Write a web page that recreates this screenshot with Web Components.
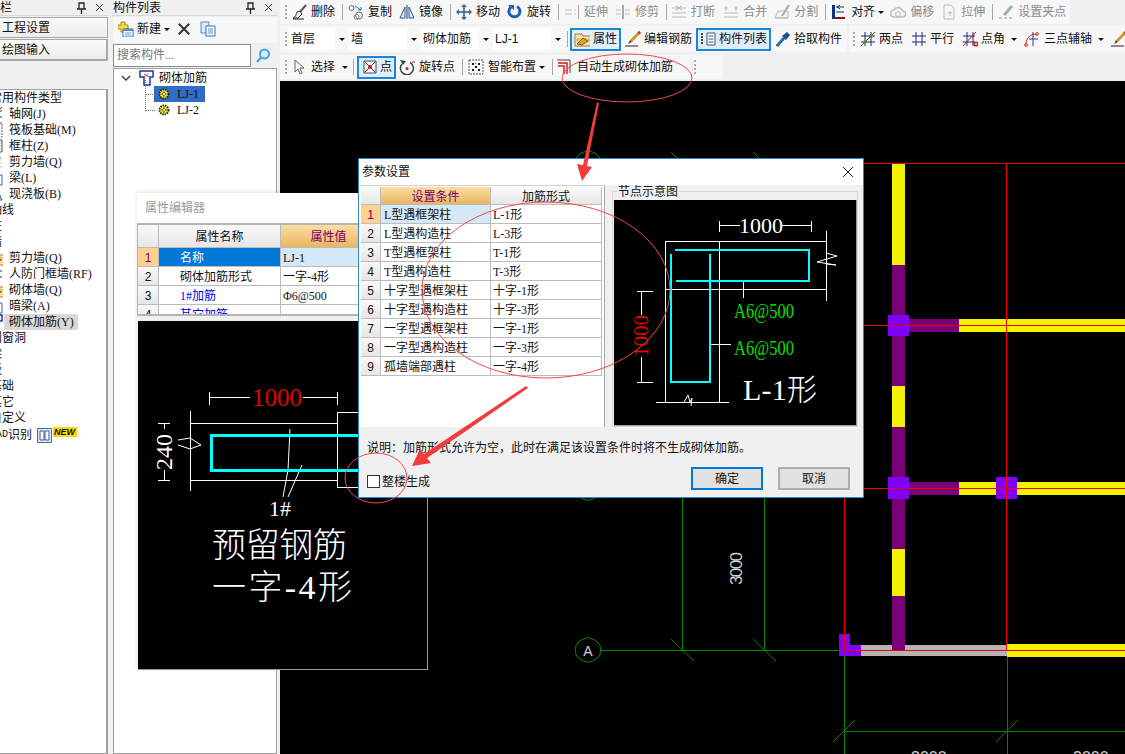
<!DOCTYPE html>
<html lang="zh">
<head>
<meta charset="utf-8">
<title>砌体加筋</title>
<style>
  html, body { margin: 0; height: 100%; overflow: hidden; background: #f0f0f0; }
  body { font: 12px/16px "Liberation Serif", "Noto Sans CJK SC", sans-serif; color: #111; }
</style>
</head>
<body>
<cad-app></cad-app>

<script>
// icons for the toolbars, all in a 16x16 box
const ICONS = {
  del: '<path d="M14 1 8 8" stroke="#556" stroke-width="2"/><path d="M8 7 10 10 6 14H1c3-1 3-4 4-6z" fill="#e8e8f4" stroke="#334"/><path d="M1 15h11" stroke="#223"/>',
  copy: '<circle cx="3.5" cy="4" r="2.5" fill="none" stroke="#666"/><circle cx="11" cy="11.5" r="3.5" fill="none" stroke="#666"/><circle cx="8.500" cy="13" r="2.500" fill="none" stroke="#888"/><path d="M7 2 13 6M13 3v3h-3" fill="none" stroke="#27a"/>',
  mirror: '<path d="M8 1v14" stroke="#335"/><path d="M6 3 1 14h5zM10 3l5 11h-5z" fill="#dfeaf8" stroke="#2a5a9a"/>',
  move: '<path d="M8 1v14M1 8h14" stroke="#2a5a8a" stroke-width="1.500"/><path d="M8 0 5 3h6zM8 16l-3-3h6zM0 8l3-3v6zM16 8l-3-3v6z" fill="#2a6aa8"/>',
  rotate: '<path d="M4 3A5.500 5.500 0 1 0 10 2.500" fill="none" stroke="#1d5fb8" stroke-width="3"/><path d="M1 1h6v5z" fill="#1d5fb8"/>',
  extend: '<path d="M1 6h7M1 10h7" stroke="#bbb"/><path d="M10 6h2M10 10h2" stroke="#ccc" stroke-dasharray="2 1"/><path d="M14.500 1v14" stroke="#aaa"/>',
  trim: '<path d="M1 6h5M1 10h5M10 6h5M10 10h5" stroke="#bbb"/><path d="M8 1v14" stroke="#aaa" stroke-width="2"/>',
  brk: '<path d="M1 4h5M10 4h5M1 13h14M1 9h14" stroke="#bbb"/><path d="M5 2 8 4 5 6M11 2 8 4l3 2" fill="none" stroke="#aaa"/>',
  merge: '<path d="M1 9h14M1 13h14" stroke="#bbb"/><path d="M3 2v5M13 2v5M1 4h4M11 4h4" stroke="#bbb"/>',
  split: '<path d="M1 14 4 7h10v7zM1 14h13" fill="#f2f2f2" stroke="#bbb"/><path d="M15 1 8 12" stroke="#aaa" stroke-width="2"/>',
  align: '<path d="M1 1h3v14H1z" fill="#12327a"/><path d="M4 13h10v2H4z" fill="#8a1020"/><path d="M5 8h8M5 3h8" stroke="#12327a"/><path d="M9 1 6 3l3 2" fill="none" stroke="#12327a"/>',
  offset: '<path d="M4 13a3.500 3.500 0 0 1 0-7 5 5 0 0 1 9 1 3 3 0 0 1-1 6z" fill="#f4f4f4" stroke="#bbb" stroke-width="1.500"/><circle cx="8" cy="10" r="2.500" fill="none" stroke="#bbb"/>',
  stretch: '<path d="M3 1h7l3 3v11H3z" fill="#f6f6f6" stroke="#bbb"/><path d="M9 7v5M7 9h4" stroke="#bbb"/>',
  grip: '<path d="M14 2 8 9 6 11" stroke="#aaa" stroke-width="3"/><path d="M1 14h3M6 14h3M11 14h3" stroke="#999"/>',
  props: '<path d="M1 3h7l1 2h8v10H1z" fill="#f8e2a8" stroke="#a87a24"/><path d="M3 8h12v2H3z" fill="#fff" stroke="#c8a050"/><path d="M3 13 9 7l5 3-6 4z" fill="#e0a030" stroke="#8a5a14"/>',
  edit: '<path d="M15 1 6 10" stroke="#c9a020" stroke-width="3"/><path d="M15 1l-1.500 1.500" stroke="#d24" stroke-width="3"/><path d="M7 11 3 13l2-4z" fill="#444"/><path d="M0 15h13" stroke="#222"/>',
  list: '<path d="M7 2h8v12H7z" fill="#fff" stroke="#456"/><path d="M8.500 5h5M8.500 8h5M8.500 11h5" stroke="#456"/><path d="M1 3h3M1 6h3M1 9h3M1 12h3" stroke="#345" stroke-width="2" stroke-dasharray="2 1"/>',
  pick: '<path d="M2 15 9 7" stroke="#2a6ab0" stroke-width="3"/><path d="M7 5 11 9 15 4 12 1z" fill="#1c4e88"/><path d="M2 15 1 14" stroke="#135"/>',
  two: '<path d="M5 1v14M11 1v14M1 5h14M1 11h14" stroke="#1a2a7a"/><path d="M1 15 15 1" stroke="#c01818"/><circle cx="11" cy="5" r="1.800" fill="#3a9a20"/><circle cx="5" cy="11" r="1.800" fill="#3a9a20"/>',
  para: '<path d="M5 1v14M11 1v14M1 5h14M1 11h14" stroke="#1a2a7a"/>',
  angle: '<path d="M5 1v14M11 1v14M1 5h12M1 11h12" stroke="#1a2a7a"/><path d="M1 15 14 1" stroke="#d01818"/><circle cx="14" cy="13" r="1.800" fill="none" stroke="#d01818" stroke-width="1.500"/>',
  arc: '<path d="M2 14C2 7 6 3 13 3" fill="none" stroke="#d01818"/><path d="M9 1v14M5 8h9" stroke="#2a3a8a"/><circle cx="2" cy="14" r="1.300" fill="#fff" stroke="#d01818"/><circle cx="13" cy="3" r="1.300" fill="#fff" stroke="#d01818"/>',
  cursor: '<path d="M4 1v12l3-3 2 5 2-1-2-5h4z" fill="#f4f6fa" stroke="#667"/>',
  point: '<path d="M2 2h12v12H2z" fill="#fff" stroke="#345"/><path d="M3 3l10 10M13 3 3 13" stroke="#345"/><circle cx="8" cy="8" r="2" fill="#d01818"/>',
  rpoint: '<path d="M3 5A6.500 6.500 0 1 0 11 3.500" fill="none" stroke="#345" stroke-width="1.500"/><path d="M1 1l6 1-3 4z" fill="#345"/><circle cx="8" cy="9.500" r="1.500" fill="#d01818"/><path d="M13 3h3" stroke="#d01818"/>',
  smart: '<path d="M1 1h14v14H1z" fill="#f8f8f8" stroke="#556" stroke-dasharray="2 1"/><path d="M4 4h2v2H4zM10 4h2v2h-2zM7 7h2v2H7zM4 10h2v2H4zM10 10h2v2h-2z" fill="#123"/><path d="M7 4h1v1H7z" fill="#2a7ad0"/>',
  auto: '<path d="M0 1h13v13" fill="none" stroke="#444"/><path d="M1 4h9v11M1 7h6v8" fill="none" stroke="#e01818" stroke-width="1.500"/>',
  fresh: '<path d="M3 1h4v3h3v4H7v3H3V8H0V4h3z" fill="#f4d84a" stroke="#b08a10"/><path d="M5 8h10v8H5z" fill="#fff" stroke="#3a6ab0"/><path d="M5 8h10v2H5z" fill="#5a8ad0"/><path d="M7 12h6M7 14h6" stroke="#7a9ad0"/>',
  dup: '<path d="M1 1h8v11H1z" fill="#dce8f8" stroke="#5a8ac0"/><path d="M6 5h9v10H6z" fill="#fff" stroke="#3a6ab0"/><path d="M8 8h5M8 10h5M8 12h5" stroke="#5a8ac0"/>',
  x: '<path d="M2 2l12 12M14 2 2 14" stroke="#333" stroke-width="2.200"/>',
  gear: '<circle cx="8" cy="8" r="6" fill="#f6e81c" stroke="#222" stroke-dasharray="2 1.200" stroke-width="2.500"/><path d="M8 4v8M4 8h8" stroke="#333"/><circle cx="8" cy="8" r="2" fill="#fff" stroke="#555"/>',
  wallset: '<path d="M2 1h13v6h-3v8H6V7H2z" fill="#fff" stroke="#1a3a9a" stroke-width="1.500"/><path d="M6 4l5 3M6 7l4-3" stroke="#d04040"/>'
};

function svgIcon(name, size = 16) {
  return `<svg width="${size}" height="${size}" viewBox="0 0 16 16">${ICONS[name] || ''}</svg>`;
}

class ToolBtn extends HTMLElement {
  connectedCallback() {
    const icon = this.getAttribute('icon');
    const label = this.getAttribute('label') || '';
    const drop = this.hasAttribute('drop');
    this.attachShadow({ mode: 'open' }).innerHTML = `
      <style>
        :host { display: inline-flex; align-items: center; gap: var(--g, 4px); height: 22px; flex-shrink: 0; white-space: nowrap; box-sizing: border-box; }
        :host([disabled]) { color: #8d8d8d; }
        :host([on]) { border: 2px solid #1a86d8; background: #dfeefb; padding: 0 2px; height: 23px; }
        svg { display: block; flex-shrink: 0; }
        i { width: 0; height: 0; margin-left: var(--d, -1px); border: 3px solid transparent; border-top: 3px solid #111; border-bottom: 0; }
      </style>
      ${svgIcon(icon)}<span>${label}</span>${drop ? '<i></i>' : ''}`;
  }
}
customElements.define('tool-btn', ToolBtn);

class ToolSep extends HTMLElement {
  connectedCallback() {
    this.attachShadow({ mode: 'open' }).innerHTML = `
      <style>:host { display: block; width: 1px; height: 16px; background: #a8a8a8; flex-shrink: 0; }</style>`;
  }
}
customElements.define('tool-sep', ToolSep);

class ToolGrip extends HTMLElement {
  connectedCallback() {
    this.attachShadow({ mode: 'open' }).innerHTML = `
      <style>:host { display: block; width: 2px; height: 15px; flex-shrink: 0;
        background: repeating-linear-gradient(#aaa 0 2px, transparent 2px 4px); }</style>`;
  }
}
customElements.define('tool-grip', ToolGrip);

class ToolCombo extends HTMLElement {
  connectedCallback() {
    const w = this.getAttribute('width') || 58;
    this.attachShadow({ mode: 'open' }).innerHTML = `
      <style>
        :host { display: flex; align-items: center; height: 22px; flex-shrink: 0; }
        div { width: ${w}px; height: 22px; line-height: 22px; background: #fff; padding-left: 2px; box-sizing: border-box; overflow: hidden; }
        span { width: 14px; display: flex; justify-content: center; }
        i { border: 3px solid transparent; border-top: 3px solid #111; border-bottom: 0; }
      </style>
      <div><slot></slot></div><span><i></i></span>`;
  }
}
customElements.define('tool-combo', ToolCombo);

// one toolbar strip; children sit in a flex row
class ToolStrip extends HTMLElement {
  connectedCallback() {
    this.attachShadow({ mode: 'open' }).innerHTML = `
      <style>
        :host { display: flex; align-items: center; flex-shrink: 0; box-sizing: border-box; font: 12px/16px "Liberation Sans", "Noto Sans CJK SC", sans-serif; }
      </style>
      <slot></slot>`;
  }
}
customElements.define('tool-strip', ToolStrip);

class ToolArea extends HTMLElement {
  connectedCallback() {
    this.attachShadow({ mode: 'open' }).innerHTML = `
      <style>
        :host { display: flex; flex-direction: column; height: 81px; flex-shrink: 0; background: #f0f0f0; overflow: hidden; }
        .r { display: flex; }
        .one { height: 24px; margin-bottom: 2px; }
        .two { height: 26px; margin-bottom: 3px; }
        .three { height: 24px; }
        tool-strip { background: #f7f7f7; }
        tool-sep { margin: 0 5px 0 7px; }
      </style>
      <div class="r one">
        <tool-strip style="padding:0 5px;width:790px">
          <tool-grip style="margin-right:5px"></tool-grip>
          <tool-btn icon="del" label="删除" style="--g:3px"></tool-btn><tool-sep></tool-sep>
          <tool-btn icon="copy" label="复制"></tool-btn>
          <tool-btn icon="mirror" label="镜像" style="margin-left:7px"></tool-btn><tool-sep></tool-sep>
          <tool-btn icon="move" label="移动"></tool-btn>
          <tool-btn icon="rotate" label="旋转" style="margin-left:7px"></tool-btn><tool-sep></tool-sep>
          <tool-btn disabled icon="extend" label="延伸"></tool-btn>
          <tool-btn disabled icon="trim" label="修剪" style="margin-left:7px"></tool-btn><tool-sep></tool-sep>
          <tool-btn disabled icon="brk" label="打断" style="margin-left:-1px"></tool-btn>
          <tool-btn disabled icon="merge" label="合并" style="margin-left:8px"></tool-btn>
          <tool-btn disabled icon="split" label="分割" style="margin-left:7px"></tool-btn><tool-sep></tool-sep>
          <tool-btn icon="align" label="对齐" drop></tool-btn>
          <tool-btn disabled icon="offset" label="偏移" style="margin-left:6px"></tool-btn>
          <tool-btn disabled icon="stretch" label="拉伸" style="margin-left:7px"></tool-btn><tool-sep></tool-sep>
          <tool-btn disabled icon="grip" label="设置夹点"></tool-btn>
        </tool-strip>
      </div>
      <div class="r two">
        <tool-strip style="padding-left:5px;width:285px">
          <tool-grip style="margin-right:2px"></tool-grip>
          <tool-combo width="46">首层</tool-combo>
          <tool-combo width="58">墙</tool-combo>
          <tool-combo width="58">砌体加筋</tool-combo>
          <tool-combo width="58">LJ-1</tool-combo>
        </tool-strip>
        <tool-strip style="padding-left:2px;width:282px">
          <tool-sep style="margin:0 2px 0 0"></tool-sep>
          <tool-btn on icon="props" label="属性" style="--g:3px;width:51px"></tool-btn>
          <tool-btn icon="edit" label="编辑钢筋" style="margin-left:4px;--g:3px"></tool-btn>
          <tool-btn on icon="list" label="构件列表" style="margin-left:4px;--g:3px;width:75px"></tool-btn>
          <tool-btn icon="pick" label="拾取构件" style="margin-left:4px;--g:3px"></tool-btn>
        </tool-strip>
        <tool-strip style="margin-left:2px;padding-left:4px;width:276px">
          <tool-grip style="margin-right:5px"></tool-grip>
          <tool-btn icon="two" label="两点" style="--g:3px"></tool-btn>
          <tool-btn icon="para" label="平行" style="margin-left:8px;--g:3px"></tool-btn>
          <tool-btn icon="angle" label="点角" drop style="margin-left:8px;--g:3px;--d:3px"></tool-btn>
          <tool-btn icon="arc" label="三点辅轴" drop style="margin-left:7px;--d:2px"></tool-btn>
          <tool-btn icon="edit" label="" style="margin-left:7px"></tool-btn>
        </tool-strip>
      </div>
      <div class="r three">
        <tool-strip style="padding-left:5px;width:410px">
          <tool-grip style="margin-right:4px"></tool-grip>
          <tool-btn icon="cursor" label="选择" drop style="--d:3px"></tool-btn>
          <tool-sep style="margin:0 3px 0 5px"></tool-sep>
          <tool-btn on icon="point" label="点" style="width:39px;--g:2px;padding-left:3px"></tool-btn>
          <tool-btn icon="rpoint" label="旋转点" style="margin-left:3px"></tool-btn><tool-sep></tool-sep>
          <tool-btn icon="smart" label="智能布置" drop></tool-btn><tool-sep></tool-sep>
          <tool-btn icon="auto" label="自动生成砌体加筋" style="margin-left:-1px"></tool-btn>
        </tool-strip>
        <tool-strip style="margin-left:3px;width:30px;padding-left:1px"><tool-grip></tool-grip></tool-strip>
      </div>`;
  }
}
customElements.define('tool-area', ToolArea);

class PaneTitle extends HTMLElement {
  connectedCallback() {
    this.attachShadow({ mode: 'open' }).innerHTML = `
      <style>
        :host { display: flex; align-items: center; height: 15px; flex-shrink: 0; overflow: hidden; border-bottom: 1px solid #d8d8d8; line-height: 14px; }
        .t { flex: 1; white-space: nowrap; }
        svg { display: block; }
      </style>
      <div class="t"><slot></slot></div>
      <svg width="9" height="12" viewBox="0 0 9 12" style="margin-right:9px"><path d="M2 1h5v6H2zM0 7h9M4.500 7v5" fill="none" stroke="#222" stroke-width="1.300"/></svg>
      <svg width="9" height="9" viewBox="0 0 9 9" style="margin-right:4px"><path d="M1 1l7 7M8 1 1 8" stroke="#333"/></svg>`;
  }
}
customElements.define('pane-title', PaneTitle);

class NavRow extends HTMLElement {
  connectedCallback() {
    const tail = this.getAttribute('icon');
    this.attachShadow({ mode: 'open' }).innerHTML = `
      <style>
        :host { display: flex; align-items: center; height: 16px; white-space: nowrap; }
        :host([group]) { margin-left: -10px; }
        :host(:not([group])) { margin-left: -13px; }
        svg { display: block; flex-shrink: 0; margin-right: 6px; }
        :host([hi]) span { background: #d8d8d8; padding: 0 4px 0 5px; margin-left: -5px; height: 16px; }
      </style>
      ${tail ? svgIcon(tail) : ''}<span><slot></slot></span>`;
  }
}
customElements.define('nav-row', NavRow);

class NavPane extends HTMLElement {
  connectedCallback() {
    this.attachShadow({ mode: 'open' }).innerHTML = `
      <style>
        :host { display: flex; flex-direction: column; width: 108px; flex-shrink: 0; overflow: hidden; }
        .btn { height: 21px; line-height: 21px; box-sizing: border-box; padding-left: 2px; border: 1px solid #a8a8a8; border-left: 0; background: linear-gradient(#fafafa, #ececec); margin-top: 1px; }
        .btn + .btn { height: 22px; border-right-width: 2px; border-bottom-width: 2px; }
        .spacer { height: 28px; }
        .tree { flex: 1; background: #fff; border: 1px solid #a0a0a0; border-left: 0; border-right-width: 2px; overflow: hidden; }
        .new { display: inline-flex; align-items: center; }
        .new em { font: 10px/16px "Liberation Mono", monospace; }
        .new svg { display: block; margin-left: 5px; }
        .new b { font: italic bold 9px/10px "Liberation Sans", sans-serif; background: #ffd800; color: #111; padding: 0 2px 0 1px; margin: -7px 0 0 1px; }
      </style>
      <pane-title>栏</pane-title>
      <div class="btn">工程设置</div>
      <div class="btn">绘图输入</div>
      <div class="spacer"></div>
      <div class="tree">
        <nav-row group>常用构件类型</nav-row>
        <nav-row icon="two">轴网(J)</nav-row>
        <nav-row icon="smart">筏板基础(M)</nav-row>
        <nav-row icon="list">框柱(Z)</nav-row>
        <nav-row icon="merge">剪力墙(Q)</nav-row>
        <nav-row icon="dup">梁(L)</nav-row>
        <nav-row icon="mirror">现浇板(B)</nav-row>
        <nav-row group>轴线</nav-row>
        <nav-row group>柱</nav-row>
        <nav-row group>墙</nav-row>
        <nav-row icon="props">剪力墙(Q)</nav-row>
        <nav-row icon="para">人防门框墙(RF)</nav-row>
        <nav-row icon="props">砌体墙(Q)</nav-row>
        <nav-row icon="dup">暗梁(A)</nav-row>
        <nav-row hi icon="wallset">砌体加筋(Y)</nav-row>
        <nav-row group>门窗洞</nav-row>
        <nav-row group>梁</nav-row>
        <nav-row group>板</nav-row>
        <nav-row group>基础</nav-row>
        <nav-row group>其它</nav-row>
        <nav-row group>自定义</nav-row>
        <nav-row group><span class="new"><em>CAD</em>识别<svg width="15" height="15" viewBox="0 0 15 15"><path d="M.500.500h14v14H.500z" fill="#dfe8f6" stroke="#4a6a9a"/><path d="M3 3h4v9H3zM8 3h4v9H8z" fill="#fff" stroke="#3a5a9a"/></svg><b>NEW</b></span></nav-row>
      </div>`;
  }
}
customElements.define('nav-pane', NavPane);

class PartPane extends HTMLElement {
  connectedCallback() {
    this.attachShadow({ mode: 'open' }).innerHTML = `
      <style>
        :host { display: flex; flex-direction: column; width: 164px; flex-shrink: 0; overflow: hidden; }
        .bar { display: flex; align-items: center; height: 26px; padding: 0 0 2px 5px; box-sizing: border-box; background: #f7f7f7; margin-top: 1px; }
        .bar svg { display: block; }
        .bar i { border: 3px solid transparent; border-top: 3px solid #111; border-bottom: 0; margin: 0 7px 0 3px; }
        .search { display: flex; height: 25px; align-items: center; }
        .search div { width: 138px; height: 23px; line-height: 21px; box-sizing: border-box; border: 1px solid #8c8c8c; background: #fff; color: #777; padding-left: 3px; }
        .search svg { margin-left: 5px; }
        .tree { flex: 1; background: #fff; border: 1px solid #a0a0a0; position: relative; padding-left: 7px; }
        .row { display: flex; align-items: center; height: 16px; white-space: nowrap; }
        .top { height: 17px; }
        .top svg:first-child { margin-right: 7px; }
        .top span { margin-left: 5px; }
        .kid { margin-left: 33px; width: 51px; padding-left: 4px; box-sizing: border-box; gap: 7px; }
        .kid.sel { background: #2f6cc4; }
        .dots { position: absolute; left: 31px; top: 11px; width: 9px; height: 31px; box-sizing: border-box; border-left: 1px dotted #666; }
        .dots::before, .dots::after { content: ""; position: absolute; left: 0; width: 9px; border-top: 1px dotted #666; }
        .dots::before { top: 14px; } .dots::after { top: 30px; }
      </style>
      <pane-title>构件列表</pane-title>
      <div class="bar">
        ${svgIcon('fresh')}<span style="margin-left:3px">新建</span><i></i>
        ${svgIcon('x', 14)}<span style="width:9px"></span>${svgIcon('dup')}
      </div>
      <div class="search">
        <div>搜索构件...</div>
        <svg width="15" height="15" viewBox="0 0 15 15"><circle cx="8.500" cy="6" r="4.500" fill="#d6ecfa" stroke="#4aa3df" stroke-width="2"/><path d="M5 9.500 1 14" stroke="#4aa3df" stroke-width="2.500"/></svg>
      </div>
      <div class="tree">
        <div class="dots"></div>
        <div class="row top">
          <svg width="10" height="6" viewBox="0 0 10 6"><path d="M1 1l4 4 4-4" fill="none" stroke="#444" stroke-width="1.500"/></svg>
          ${svgIcon('wallset')}<span>砌体加筋</span>
        </div>
        <div class="row kid sel">${svgIcon('gear', 12)}<span>LJ-1</span></div>
        <div class="row kid">${svgIcon('gear', 12)}<span>LJ-2</span></div>
      </div>`;
  }
}
customElements.define('part-pane', PartPane);

// plain spreadsheet grid used by both floating windows
class DataGrid extends HTMLElement {
  connectedCallback() {
    const widths = this.getAttribute('widths').split(',').map(Number);
    const head = this.getAttribute('head').split('|');
    const rows = this.getAttribute('rows').split(';').map((r) => r.split('|'));
    const activeCol = Number(this.getAttribute('active-col'));
    const headH = Number(this.getAttribute('head-height') || 18);
    const strong = this.getAttribute('strong-col');
    const soft = this.getAttribute('soft-col');
    const blue = (this.getAttribute('blue-rows') || '').split(',');
    const cols = widths.map((w) => w + 'px').join(' ');
    const headCells = head.map((h, i) => `<div class="c hd ${i === activeCol ? 'act' : ''}">${h}</div>`).join('');
    const body = rows.map((r, ri) => {
      const n = ri + 1;
      const cells = r.map((t, ci) => {
        let cls = 'c v' + ci;
        if (ri === 0 && String(ci) === strong) cls += ' strong';
        if (ri === 0 && String(ci) === soft) cls += ' soft';
        if (ci === 0 && blue.includes(String(n))) cls += ' blue';
        return `<div class="${cls}">${t}</div>`;
      }).join('');
      return `<div class="c n ${ri === 0 ? 'cur' : ''}">${n}</div>${cells}`;
    }).join('');
    this.attachShadow({ mode: 'open' }).innerHTML = `
      <style>
        :host { display: block; overflow: hidden; }
        .g { display: grid; grid-template-columns: ${cols}; grid-template-rows: ${headH}px; grid-auto-rows: 19px; }
        .c { box-sizing: border-box; border-right: 1px solid #bcbcbc; border-bottom: 1px solid #bcbcbc; line-height: 21px; white-space: nowrap; overflow: hidden; padding-left: var(--pad0, 3px); background: #fff; }
        .v1 { padding-left: 2px; }
        .hd { text-align: center; padding: 0; line-height: ${headH + 2}px; background: linear-gradient(#fafafa, #e6e6e6); }
        .act { background: linear-gradient(#fcdda0, #e8b662); color: #74006e; }
        .n { text-align: center; padding: 0; background: linear-gradient(#f8f8f8, #e6e6e6); font-family: "Liberation Sans", sans-serif; }
        .cur { background: #fdd28c; color: #74006e; }
        .soft { background: #d6e7f6; }
        .strong { background: #0078d7; color: #fff; }
        .blue { color: #0000f0; }
      </style>
      <div class="g"><div class="c hd"></div>${headCells}${body}</div>`;
  }
}
customElements.define('data-grid', DataGrid);

class PropEditor extends HTMLElement {
  connectedCallback() {
    this.attachShadow({ mode: 'open' }).innerHTML = `
      <style>
        :host { position: absolute; left: 137px; top: 193px; width: 291px; height: 477px; display: flex; flex-direction: column; background: #f0f0f0; box-shadow: 0 -1px 4px rgba(0,0,0,.12); }
        .title { height: 30px; line-height: 30px; padding-left: 8px; background: #fff; color: #9a9a9a; flex-shrink: 0; }
        .table { height: 93px; box-sizing: border-box; border: 1px solid #b4b4b4; border-width: 2px 0 2px 1px; background: #fff; flex-shrink: 0; --pad0: 21px; }
        data-grid { height: 89px; }
        .pic { flex: 1; margin-top: 5px; margin-left: 1px; background: #000; border-right: 1px solid #999; border-bottom: 1px solid #999; }
        svg { display: block; }
      </style>
      <div class="title">属性编辑器</div>
      <div class="table">
        <data-grid widths="21,122,96" head="属性名称|属性值" active-col="1" head-height="23"
          strong-col="0" soft-col="1" blue-rows="3,4"
          rows="名称|LJ-1;砌体加筋形式|一字-4形;1#加筋| Φ6@500;其它加筋|"></data-grid>
      </div>
      <div class="pic">
        <svg width="289" height="348" viewBox="138 321 289 348" fill="none" shape-rendering="crispEdges">
          <path stroke="#fff" d="M209 397h41M303 397h34M209 392v13M337 392v13M190 411v80M190 423h147M190 480h147M337 412h30v75h-30zM158 423h12M158 480h12M164 423v6M164 470v10"/>
          <path stroke="#fff" shape-rendering="auto" d="M178 440l12-2 11 7-11 4-12-4M290 429l-2 41-5 27M302 465l-14 32"/>
          <path stroke="#0ff" stroke-width="3" d="M211.500 435.500H380v35H211.500z"/>
          <g shape-rendering="auto" stroke="none" fill="#fff">
            <text x="277" y="406" text-anchor="middle" fill="#e00000" font-family="Liberation Serif" font-size="25">1000</text>
            <text transform="translate(172 452) rotate(-90)" text-anchor="middle" font-family="Liberation Serif" font-size="24">240</text>
            <text x="280" y="516" text-anchor="middle" font-family="Liberation Serif" font-size="22">1#</text>
            <text x="212" y="557" font-family="Noto Sans CJK SC" font-weight="300" font-size="34" textLength="135">预留钢筋</text>
            <text x="212" y="599" font-family="Liberation Serif, Noto Sans CJK SC" font-weight="300" font-size="34" textLength="140">一字-4形</text>
          </g>
        </svg>
      </div>`;
  }
}
customElements.define('prop-editor', PropEditor);

class NodePic extends HTMLElement {
  connectedCallback() {
    this.attachShadow({ mode: 'open' }).innerHTML = `
      <style>
        :host { display: block; width: 242px; height: 225px; background: #000; border-right: 1px solid #999; border-bottom: 1px solid #999; }
        svg { display: block; }
      </style>
      <svg width="242" height="225" viewBox="615 200 242 225" fill="none" shape-rendering="crispEdges">
        <path stroke="#fff" d="M720 225h21M783 225h29M720 221v11M812 221v11M666 241h161M666 289h161M666 241v161M720 241v161M827 231v70M657 402h73M744 281v17M711 344h21M638 291h16M638 382h16M642 291v24M642 357v25"/>
        <path stroke="#fff" shape-rendering="auto" d="M827 253l11 3-20 6 19 3-10-1M685 402l4-7 2 7 2-4-1 8"/>
        <path stroke="#0ff" stroke-width="2" d="M676 250h134v31h-133M672 254v128h39v-128"/>
        <g shape-rendering="auto" stroke="none">
          <text x="762" y="233" text-anchor="middle" fill="#fff" font-family="Liberation Serif" font-size="22">1000</text>
          <text transform="translate(649 336) rotate(-90)" text-anchor="middle" fill="#e00000" font-family="Liberation Serif" font-size="21">1000</text>
          <text x="735" y="318" fill="#00e000" font-family="Liberation Serif" font-size="20" textLength="60" lengthAdjust="spacingAndGlyphs">A6@500</text>
          <text x="735" y="355" fill="#00e000" font-family="Liberation Serif" font-size="20" textLength="60" lengthAdjust="spacingAndGlyphs">A6@500</text>
          <text x="744" y="400" fill="#fff" font-family="Liberation Serif, Noto Sans CJK SC" font-weight="300" font-size="30" textLength="74">L-1形</text>
        </g>
      </svg>`;
  }
}
customElements.define('node-pic', NodePic);

class ParamDialog extends HTMLElement {
  connectedCallback() {
    this.attachShadow({ mode: 'open' }).innerHTML = `
      <style>
        :host { position: absolute; left: 358px; top: 158px; width: 506px; height: 340px; box-sizing: border-box; border: 1px solid #2f86c8; background: #f0f0f0; display: flex; flex-direction: column; }
        .title { display: flex; align-items: center; justify-content: space-between; height: 26px; flex-shrink: 0; background: #fff; padding: 0 9px 0 3px; }
        .title svg { display: block; }
        .mid { display: flex; height: 243px; flex-shrink: 0; }
        .left { width: 246px; height: 242px; box-sizing: border-box; background: #fff; padding: 1px 0 0 2px; border-right: 1px solid #a8a8a8; border-top: 1px solid #d0d0d0; }
        .group { position: relative; margin: 6px 0 0 7px; width: 246px; height: 236px; box-sizing: border-box; border: 1px solid #d8d8d8; padding: 8px 0 0 1px; }
        .group span { position: absolute; left: 4px; top: -7px; background: #f0f0f0; padding: 0 1px; line-height: 14px; }
        .note { padding: 11px 0 0 8px; height: 19px; line-height: 19px; }
        .foot { display: flex; align-items: center; padding: 8px 13px 0 8px; }
        .box { width: 13px; height: 13px; box-sizing: border-box; border: 1px solid #333; background: #fff; margin: 7px 2px 0 0; }
        .lbl { margin-top: 8px; }
        .btn { width: 72px; height: 23px; box-sizing: border-box; text-align: center; line-height: 20px; background: #e1e1e1; border: 2px solid #adadad; }
        .ok { border-color: #0078d7; margin-left: auto; margin-right: 15px; }
      </style>
      <div class="title"><span>参数设置</span>
        <svg width="12" height="12" viewBox="0 0 12 12"><path d="M1 1l10 10M11 1 1 11" stroke="#222"/></svg></div>
      <div class="mid">
        <div class="left">
          <data-grid widths="20,110,111" head="设置条件|加筋形式" active-col="0" soft-col="0"
            rows="L型遇框架柱|L-1形;L型遇构造柱|L-3形;T型遇框架柱|T-1形;T型遇构造柱|T-3形;十字型遇框架柱|十字-1形;十字型遇构造柱|十字-3形;一字型遇框架柱|一字-1形;一字型遇构造柱|一字-3形;孤墙端部遇柱|一字-4形"></data-grid>
        </div>
        <div class="group"><span>节点示意图</span><node-pic></node-pic></div>
      </div>
      <div class="note">说明：加筋形式允许为空，此时在满足该设置条件时将不生成砌体加筋。</div>
      <div class="foot">
        <div class="box"></div><div class="lbl">整楼生成</div>
        <div class="btn ok">确定</div><div class="btn">取消</div>
      </div>`;
  }
}
customElements.define('param-dialog', ParamDialog);

class CadCanvas extends HTMLElement {
  connectedCallback() {
    this.attachShadow({ mode: 'open' }).innerHTML = `
      <style>
        :host { display: block; flex: 1; background: #000; overflow: hidden; }
        svg { display: block; }
      </style>
      <svg width="845" height="673" viewBox="280 81 845 673" shape-rendering="crispEdges">
        <g fill="none" stroke="#008a00">
          <path d="M601 650h243M682 163v487M764 163v487M844 650v104M1007 650v104M844 731h281M601 488h243M601 163h243"/>
          <g shape-rendering="auto">
            <path d="M671 639l23 22M753 639l23 22M833 742l22-22M996 742l22-22M671 152l23 22M753 152l23 22"/>
            <path d="M588 637.500l7 2.500 5 5 .500 5-.500 5-5 5-7 2.500-7-2.500-5-5-.500-5 .500-5 5-5z"/>
            <path d="M588 475.500l7 2.500 5 5 .500 5-.500 5-5 5-7 2.500-7-2.500-5-5-.500-5 .500-5 5-5z"/>
            <path d="M588 150.500l7 2.500 5 5 .500 5-.500 5-5 5-7 2.500-7-2.500-5-5-.500-5 .500-5 5-5z"/>
          </g>
        </g>
        <g fill="#7a0078">
          <rect x="892" y="163" width="13" height="487"/>
          <rect x="909" y="319" width="50" height="13"/>
          <rect x="909" y="482" width="50" height="13"/>
        </g>
        <g fill="#f2f200">
          <rect x="892" y="163" width="13" height="102"/>
          <rect x="892" y="386" width="13" height="41"/>
          <rect x="892" y="549" width="13" height="47"/>
          <rect x="959" y="319" width="166" height="13"/>
          <rect x="959" y="482" width="166" height="13"/>
          <rect x="1007" y="644" width="118" height="13"/>
        </g>
        <rect x="861" y="645" width="146" height="11" fill="#b4b4b4"/>
        <rect x="892" y="596" width="13" height="54" fill="#7a0078"/>
        <g fill="#7f00f4">
          <rect x="888" y="315" width="21" height="21"/>
          <rect x="888" y="477" width="21" height="22"/>
          <rect x="996" y="477" width="21" height="22"/>
          <path d="M839 634h11v11h11v11h-22z"/>
        </g>
        <path fill="none" stroke="#f00000" d="M864 163h261M864 325h261M864 488h261M844 650h281M1006 163v487M844 163v487"/>
        <g shape-rendering="auto" font-family="Liberation Sans" fill="#d0d0d0">
          <text transform="translate(742 585) rotate(-90)" font-size="17" textLength="33">3000</text>
          <text x="911" y="763" font-size="16">3000</text>
          <text x="1073" y="763" font-size="16">3000</text>
          <text x="588" y="656" text-anchor="middle" font-size="14">A</text>
          <text x="588" y="169" text-anchor="middle" font-size="14">C</text>
        </g>
      </svg>`;
  }
}
customElements.define('cad-canvas', CadCanvas);

// the red hand drawn marks lying over everything
class RedMarks extends HTMLElement {
  connectedCallback() {
    this.attachShadow({ mode: 'open' }).innerHTML = `
      <style>
        :host { position: absolute; inset: 0; pointer-events: none; }
        svg { display: block; }
      </style>
      <svg width="1125" height="754" viewBox="0 0 1125 754" fill="none">
        <g stroke="#ee4a4a">
          <ellipse cx="627" cy="78" rx="65" ry="24"/>
          <ellipse cx="546" cy="290" rx="124" ry="88"/>
          <ellipse cx="376" cy="478" rx="31" ry="25"/>
        </g>
        <g fill="#f23c3c">
          <path d="M597 102 599 103 587 166 592 167 582 181 577 164 583 165z"/>
          <path d="M526 386 528 388 427 458 431 463 412 466 420 449 424 454z"/>
        </g>
      </svg>`;
  }
}
customElements.define('red-marks', RedMarks);

class CadApp extends HTMLElement {
  connectedCallback() {
    this.attachShadow({ mode: 'open' }).innerHTML = `
      <style>
        :host { display: flex; position: relative; width: 1125px; height: 754px; overflow: hidden; background: #f0f0f0; }
        .main { display: flex; flex-direction: column; flex: 1; margin-left: 3px; min-width: 0; }
        part-pane { margin-left: 5px; }
      </style>
      <nav-pane></nav-pane>
      <part-pane></part-pane>
      <div class="main">
        <tool-area></tool-area>
        <cad-canvas></cad-canvas>
      </div>
      <prop-editor></prop-editor>
      <param-dialog></param-dialog>
      <red-marks></red-marks>`;
  }
}
customElements.define('cad-app', CadApp);
</script>
</body>
</html>
